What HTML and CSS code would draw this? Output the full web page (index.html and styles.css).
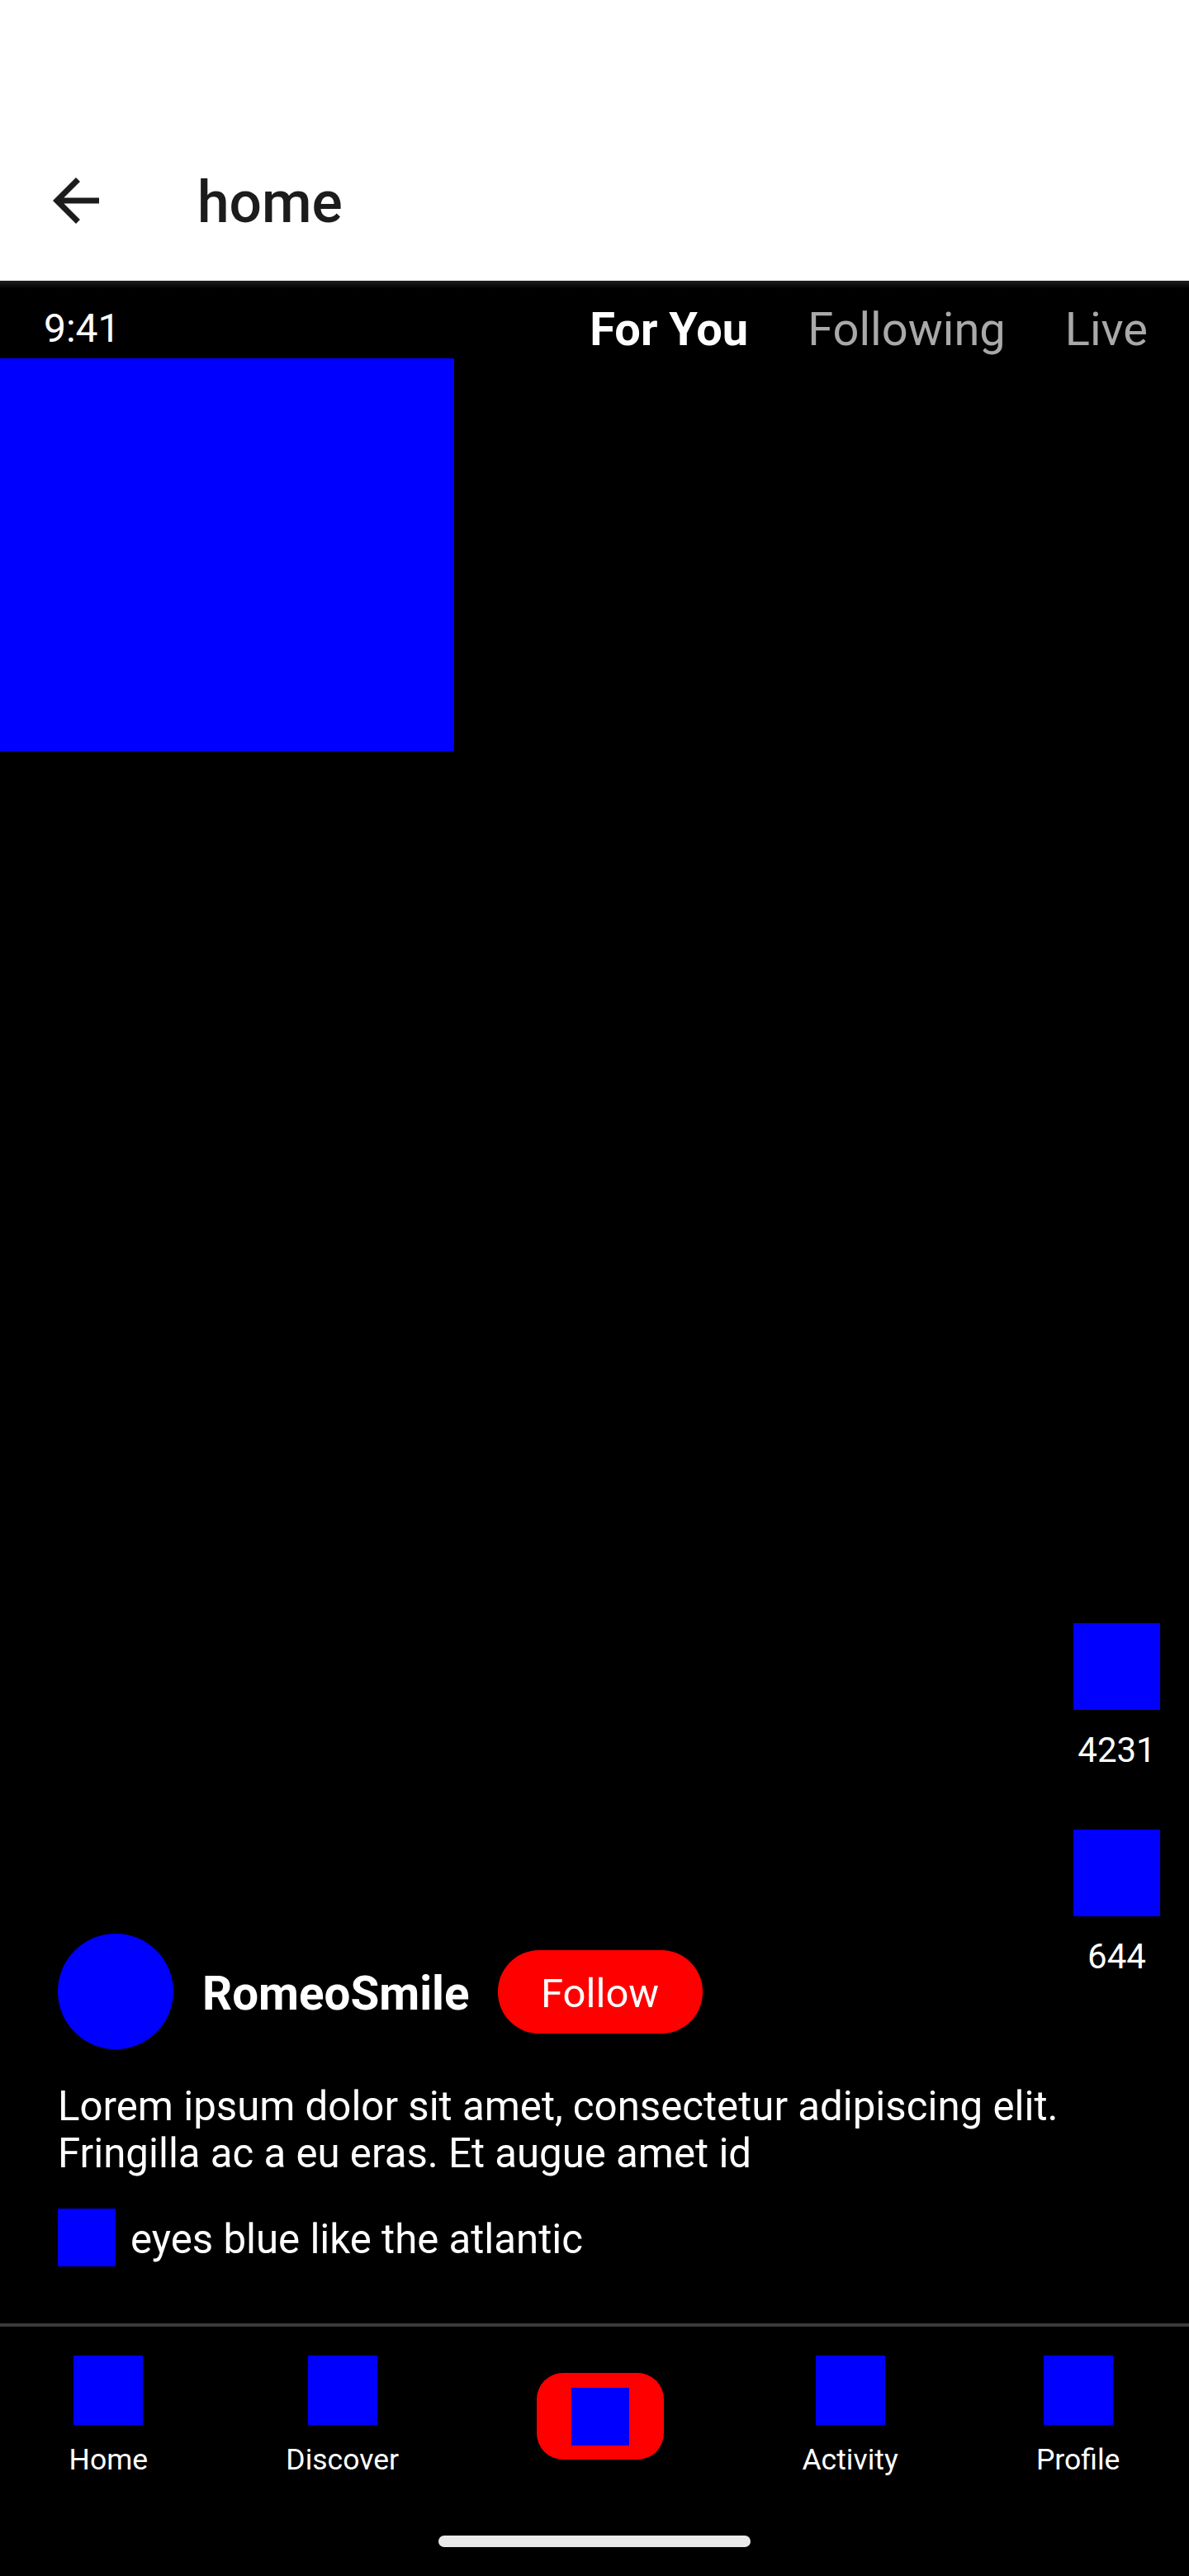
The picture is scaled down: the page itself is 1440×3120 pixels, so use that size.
FILE: index.html
```html
<!DOCTYPE html>
<html lang="en">
<head>
<meta charset="utf-8">
<title>home</title>
<link rel="stylesheet" href="styles.css">
</head>
<body>
<div class="page">
  <header class="appbar">
    <svg class="back" width="84" height="84" viewBox="0 0 24 24" aria-hidden="true"><path d="M20 11H7.830l5.590-5.590L12 4l-8 8 8 8 1.410-1.410L7.830 13H20v-2z" fill="#1c1c1c"/></svg>
    <h1 class="appbar-title">home</h1>
  </header>
  <main class="screen">
    <div class="topbar">
      <span class="clock">9:41</span>
      <nav class="tabs">
        <span class="tab tab-active">For You</span>
        <span class="tab">Following</span>
        <span class="tab">Live</span>
      </nav>
    </div>
    <div class="video"></div>
    <div class="stage">
      <section class="info">
        <div class="author">
          <div class="avatar"></div>
          <span class="name">RomeoSmile</span>
          <button class="follow">Follow</button>
        </div>
        <p class="caption">Lorem ipsum dolor sit amet, consectetur adipiscing elit. Fringilla ac a eu eras. Et augue amet id</p>
        <div class="sound"><span class="sound-icon"></span><span class="sound-name">eyes blue like the atlantic</span></div>
      </section>
      <aside class="rail">
        <div class="rail-item"><span class="rail-icon"></span><span class="rail-count">4231</span></div>
        <div class="rail-item"><span class="rail-icon"></span><span class="rail-count">644</span></div>
      </aside>
    </div>
    <nav class="bottom">
      <div class="nav-item"><span class="nav-icon"></span><span class="nav-label">Home</span></div>
      <div class="nav-item"><span class="nav-icon"></span><span class="nav-label">Discover</span></div>
      <div class="create"><span class="create-icon"></span></div>
      <div class="nav-item"><span class="nav-icon"></span><span class="nav-label">Activity</span></div>
      <div class="nav-item"><span class="nav-icon"></span><span class="nav-label">Profile</span></div>
    </nav>
    <div class="gesture"><span class="gesture-bar"></span></div>
  </main>
</div>
</body>
</html>
```
FILE: styles.css
```css
* { box-sizing: border-box; }
html, body { margin: 0; padding: 0; background: #000; }
.page {
  width: 1440px;
  height: 3120px;
  display: flex;
  flex-direction: column;
  overflow: hidden;
  font-family: Roboto, "Liberation Sans", sans-serif;
  color: #fff;
}
.appbar {
  flex: none;
  height: 340px;
  background: #fff;
  display: flex;
  align-items: flex-start;
  padding: 201px 0 0 50px;
  color: #1c1c1c;
}
.back { flex: none; display: block; }
.appbar-title {
  margin: 3px 0 0 105px;
  font-size: 69.500px;
  line-height: 84px;
  font-weight: 500;
}
.screen {
  flex: 1;
  min-height: 0;
  display: flex;
  flex-direction: column;
  background: linear-gradient(#1e1e1e, #000 10px) no-repeat #000;
}
.topbar {
  flex: none;
  height: 94px;
  display: flex;
  justify-content: space-between;
  align-items: flex-start;
  padding: 30px 50px 0 53px;
}
.clock { font-size: 48px; line-height: 56px; }
.tabs { display: flex; gap: 72px; margin-top: -4px; }
.tab { font-size: 56px; line-height: 66px; color: #a9a9a9; }
.tab-active { color: #fff; font-weight: 700; }
.video { flex: none; width: 550px; height: 476px; background: #00f; }
.stage {
  flex: 1;
  min-height: 0;
  display: flex;
  justify-content: space-between;
  align-items: flex-end;
  padding: 0 35px 0 70px;
}
.info { width: 1230px; padding-bottom: 69px; }
.author { display: flex; align-items: center; }
.avatar { width: 140px; height: 140px; border-radius: 50%; background: #00f; flex: none; }
.name { margin: 5px 0 0 35px; font-size: 56.500px; line-height: 66px; font-weight: 700; }
.follow {
  margin-left: 34px;
  width: 248px;
  height: 101px;
  border: 0;
  border-radius: 50px;
  background: #f00;
  color: #fff;
  font: 400 49px/56px Roboto, "Liberation Sans", sans-serif;
  padding: 5px 0 0 0;
}
.caption { margin: 41px 0 0 0; font-size: 49.200px; line-height: 57px; }
.sound { display: flex; align-items: center; margin-top: 38px; }
.sound-icon { width: 70px; height: 70px; background: #00f; flex: none; }
.sound-name { margin: 4px 0 0 18px; font-size: 49.200px; line-height: 56px; }
.rail { width: 105px; display: flex; flex-direction: column; gap: 71px; padding-bottom: 419px; }
.rail-item { display: flex; flex-direction: column; align-items: center; gap: 24px; }
.rail-icon { width: 105px; height: 105px; background: #00f; }
.rail-count { font-size: 42px; line-height: 50px; white-space: nowrap; }
.bottom {
  flex: none;
  height: 236px;
  border-top: 4px solid #3b3b3b;
  padding: 35px 0 0 0;
  display: flex;
  justify-content: space-around;
  align-items: flex-start;
}
.nav-item { display: flex; flex-direction: column; align-items: center; gap: 20px; }
.nav-icon { width: 84px; height: 84px; background: #00f; }
.nav-label { font-size: 35.500px; line-height: 44px; }
.create {
  width: 154px;
  height: 105px;
  margin-top: 21px;
  border-radius: 32px;
  background: #f00;
  display: flex;
  align-items: center;
  justify-content: center;
}
.create-icon { width: 70px; height: 70px; background: #00f; }
.gesture { flex: none; height: 70px; display: flex; justify-content: center; padding-top: 21px; }
.gesture-bar { width: 378px; height: 14px; border-radius: 7px; background: #eaeaea; }
```
